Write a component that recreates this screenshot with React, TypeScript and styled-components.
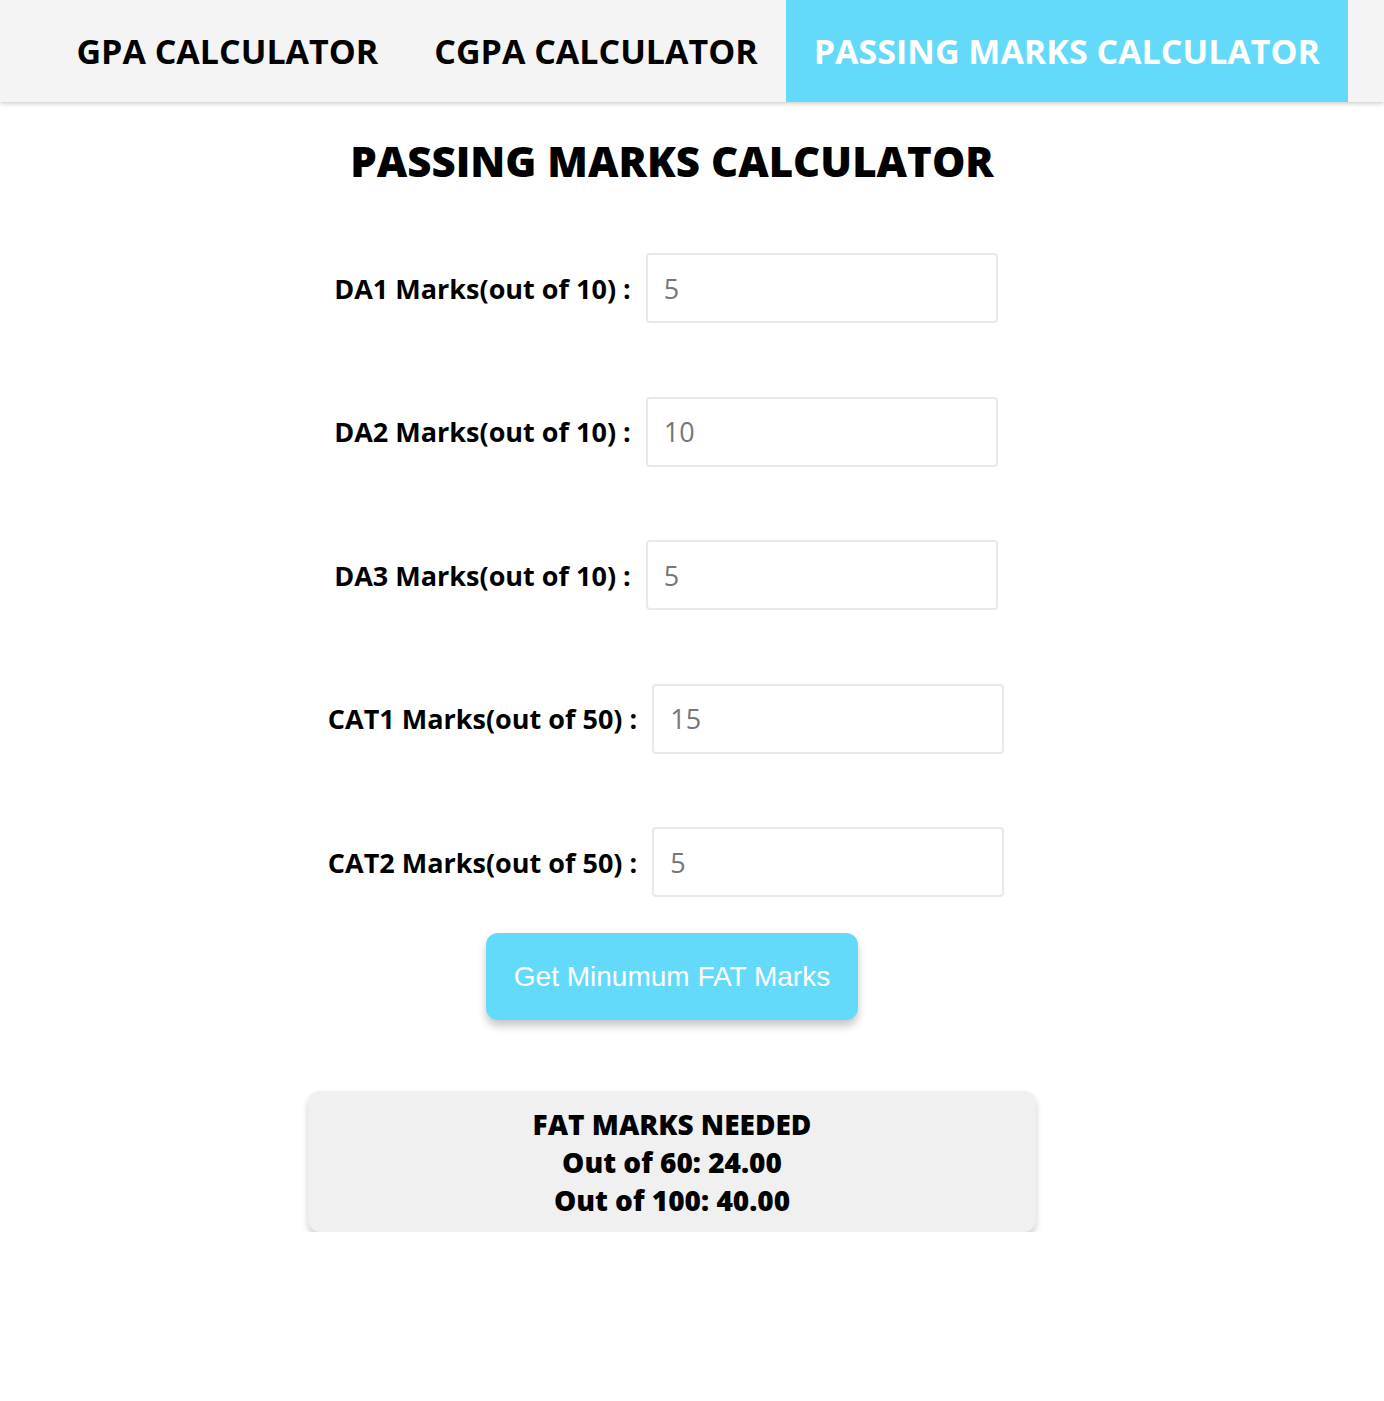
import React from "react";
import styled, { createGlobalStyle } from "styled-components";

const GlobalStyle = createGlobalStyle`
  html, body { margin: 0; padding: 0; background: #ffffff; }
  body { font-family: "Open Sans", "Noto Sans", sans-serif; color: #000; }
  * { box-sizing: border-box; }
`;

const NavBar = styled.nav`
  display: flex;
  justify-content: flex-end;
  align-items: stretch;
  height: 102px;
  padding-right: 36px;
  background: #f4f4f4;
  box-shadow: 0 2px 4px rgba(0, 0, 0, 0.18);
`;

const NavItem = styled.a<{ $active?: boolean }>`
  display: flex;
  align-items: center;
  padding: 0 28px;
  font-family: "Open Sans", sans-serif;
  font-weight: 700;
  font-size: 34px;
  text-decoration: none;
  color: ${(p) => (p.$active ? "#ffffff" : "#000000")};
  background: ${(p) => (p.$active ? "#64dafb" : "transparent")};
`;

const Main = styled.main`
  display: flex;
  flex-direction: column;
  align-items: center;
  padding-right: 40px;
`;

const Title = styled.h1`
  margin: 31px 0 64px;
  font-family: "Open Sans", sans-serif;
  font-weight: 800;
  font-size: 42px;
  line-height: 56px;
`;

const Form = styled.div`
  display: flex;
  flex-direction: column;
  align-items: center;
  gap: 73.5px;
  margin-right: 12px;
`;

const Row = styled.div`
  display: flex;
  align-items: center;
  gap: 15px;
`;

const Label = styled.label`
  font-family: "Open Sans", sans-serif;
  font-weight: 700;
  font-size: 27px;
`;

const Input = styled.input`
  width: 352px;
  height: 70px;
  padding: 0 16px;
  border: 2px solid #e9e9e9;
  border-radius: 4px;
  font-family: "Open Sans", sans-serif;
  font-size: 27px;
  color: #777777;
  background: #fff;
  outline: none;
`;

const Button = styled.button`
  margin-top: 36px;
  width: 372px;
  height: 87px;
  border: none;
  border-radius: 12px;
  background: #64dafb;
  color: #ffffff;
  font-family: "Liberation Sans", Arial, sans-serif;
  font-size: 28px;
  box-shadow: 0 6px 8px rgba(0, 0, 0, 0.22);
  cursor: pointer;
`;

const Result = styled.div`
  margin-top: 71px;
  width: 728px;
  height: 141px;
  padding-top: 14px;
  background: #f0f0f0;
  border-radius: 12px;
  box-shadow: 0 4px 6px rgba(0, 0, 0, 0.2);
  display: flex;
  flex-direction: column;
  align-items: center;
`;

const ResultLine = styled.div`
  font-family: "Open Sans", sans-serif;
  font-weight: 800;
  font-size: 28px;
  line-height: 38px;
`;

const fields = [
  { label: "DA1 Marks(out of 10) :", value: "5" },
  { label: "DA2 Marks(out of 10) :", value: "10" },
  { label: "DA3 Marks(out of 10) :", value: "5" },
  { label: "CAT1 Marks(out of 50) :", value: "15" },
  { label: "CAT2 Marks(out of 50) :", value: "5" },
];

export default function App() {
  return (
    <>
      <GlobalStyle />
      <NavBar>
        <NavItem href="#">GPA CALCULATOR</NavItem>
        <NavItem href="#">CGPA CALCULATOR</NavItem>
        <NavItem href="#" $active>
          PASSING MARKS CALCULATOR
        </NavItem>
      </NavBar>
      <Main>
        <Title>PASSING MARKS CALCULATOR</Title>
        <Form>
          {fields.map((f) => (
            <Row key={f.label}>
              <Label>{f.label}</Label>
              <Input defaultValue={f.value} />
            </Row>
          ))}
        </Form>
        <Button>Get Minumum FAT Marks</Button>
        <Result>
          <ResultLine>FAT MARKS NEEDED</ResultLine>
          <ResultLine>Out of 60: 24.00</ResultLine>
          <ResultLine>Out of 100: 40.00</ResultLine>
        </Result>
      </Main>
    </>
  );
}
